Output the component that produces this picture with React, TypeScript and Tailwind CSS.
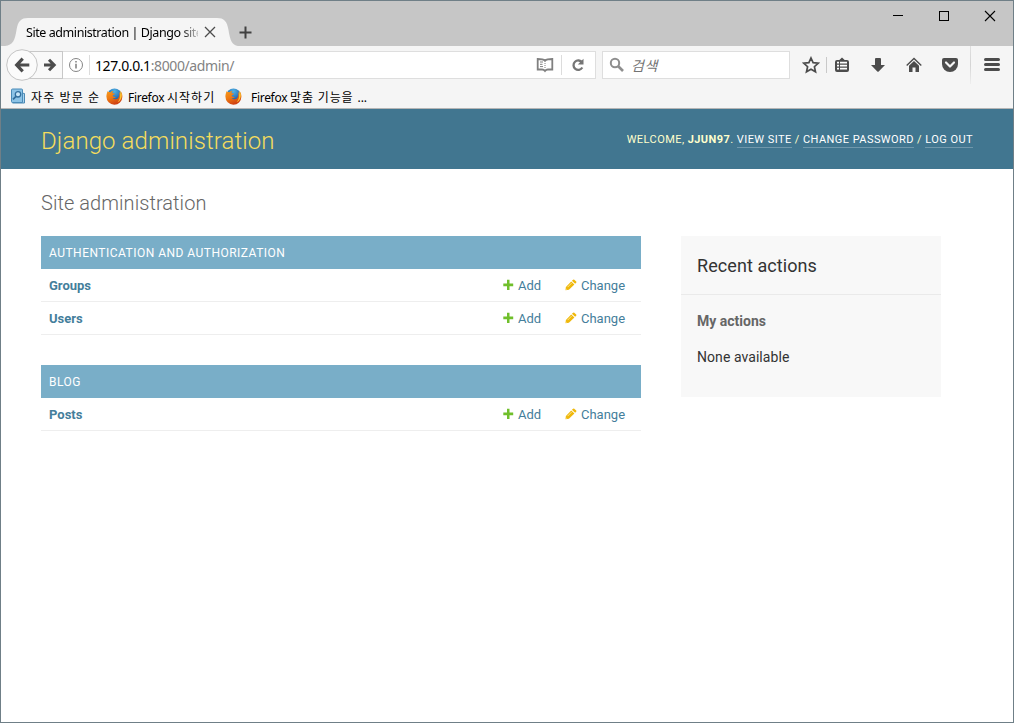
import type { ReactNode } from 'react';

function Firefox() {
  return (
    <svg width="17" height="17" viewBox="0 0 17 17" className="shrink-0">
      <defs>
        <linearGradient id="fox" x1="0" y1="0" x2="0.5" y2="1">
          <stop offset="0" stopColor="#f59a1d" />
          <stop offset="0.5" stopColor="#ee7a13" />
          <stop offset="1" stopColor="#cf3f12" />
        </linearGradient>
        <radialGradient id="globe" cx="0.5" cy="0.2" r="0.8">
          <stop offset="0" stopColor="#4fb4e6" />
          <stop offset="0.6" stopColor="#2a6fb5" />
          <stop offset="1" stopColor="#1b3c7c" />
        </radialGradient>
      </defs>
      <circle cx="8.500" cy="7.600" r="7.200" fill="url(#globe)" />
      <path d="M1.600 3.200C1 5 .4 6.500.4 8.600a8 8 0 0 0 16 .2c.1-2.600-.8-4.600-2.200-6 .6 1.500.5 2.700.4 3.700-.3-1.200-.8-2-1.500-2.600.6 2.300.4 4.600-.8 6-1.500 1.800-4.300 1.900-5.700.3 1.500.3 2.500-.2 3.300-.9-1.100-.6-2.500-.3-3.300-1.200.1-.9.9-1 1.700-1.500.5-.4.700-.7.600-1-.8-.2-1.700-.1-2.400-.7-.2-.7.300-1.300.9-1.900-1.200 0-2.200.5-2.800 1.200-.9-.1-1.600-.100-2-.1-.5-.3-.9-.7-1-1.100z" fill="url(#fox)" />
      <path d="M14.200 2.800c2 2.500 2 5.500.8 8-.8 1.800-2 2.800-3.500 3.500 1.800-2 2.800-4.500 2.600-7.500.4-1.300.4-2.500.1-4z" fill="#fbc62e" />
    </svg>
  );
}

function Plus() {
  return (
    <svg width="12" height="12" viewBox="0 0 12 12" className="shrink-0">
      <path d="M5 .8h2.500v3.700h3.700v2.700H7.500v3.700H5V7.200H1.300V4.500H5z" fill="#70bf2b" />
    </svg>
  );
}

function Pencil() {
  return (
    <svg width="12" height="12" viewBox="0 0 12 12" className="shrink-0">
      <path d="M.5 11.200l.4-3.300L6.200 2.400l3.200 3.100L3.900 10.800z" fill="#efb80b" />
      <path d="M6.900 1.800L8.100.7a.9.9 0 0 1 1.200 0l1.900 1.800a.9.9 0 0 1 0 1.200L10.100 4.800z" fill="#efb80b" />
      <path d="M2.600 8.100l4-4M1.300 10.400l.7-.2" stroke="#fff3c4" strokeWidth=".7" />
    </svg>
  );
}

function Module({ title, rows }: { title: string; rows: string[] }) {
  return (
    <section className="mb-[30px]">
      <h2 className="flex h-[33px] items-center bg-[#79aec8] px-2 text-[12px] tracking-[0.48px] text-white uppercase">{title}</h2>
      {rows.map((name) => (
        <div key={name} className="flex h-[33px] items-center border-b border-[#eeeeee] pl-2 text-[13px] text-[#447e9b]">
          <a className="flex-1 pt-[2px] font-bold">{name}</a>
          <a className="flex w-[63px] items-center"><Plus /><span className="ml-1 pt-[2px]">Add</span></a>
          <a className="flex w-[76px] items-center"><Pencil /><span className="ml-1 pt-[2px]">Change</span></a>
        </div>
      ))}
    </section>
  );
}

function Tool({ children, className }: { children: ReactNode; className: string }) {
  return <div className={`flex h-[38px] shrink-0 items-center justify-center text-[#4c4c4c] ${className}`}>{children}</div>;
}

function TitleBar() {
  return (
    <div className="flex h-[45px] bg-[#c6c6c6]">
      <div className="relative ml-1 flex h-[45px] w-[233px] pt-[17px]">
        <svg className="absolute top-[17px] left-0" width="233" height="28" viewBox="0 0 233 28">
          <path d="M0 28C8 27 10 22 11.500 12C13 3 16 0 23 0H212C219 0 222 3 223.500 12C225 22 227 27 233 28z" fill="#f5f5f5" />
        </svg>
        <span className="relative ml-[21px] w-[172px] overflow-hidden font-['Noto_Sans'] text-[12.5px] leading-[29px] tracking-[-0.43px] whitespace-nowrap text-black [mask-image:linear-gradient(to_right,#000_155px,transparent_176px)]">Site administration | Django site</span>
        <svg className="relative mt-[8px] ml-[6px]" width="12" height="12" viewBox="0 0 12 12">
          <path d="M1 1l10 10M11 1L1 11" stroke="#4c4c4c" strokeWidth="1.300" />
        </svg>
      </div>
      <svg className="mt-[25px] ml-px" width="13" height="13" viewBox="0 0 13 13">
        <path d="M6.500 .5v12M.5 6.500h12" stroke="#414141" strokeWidth="2" />
      </svg>
      <div className="ml-auto flex pt-[9px] pr-[17px]">
        <svg width="104" height="12" viewBox="0 0 104 12" fill="none" stroke="#000">
          <path d="M1 5.500h10" />
          <rect x="47.500" y="1.500" width="9" height="9" />
          <path d="M93 1l10 10M103 1L93 11" strokeWidth="1.100" />
        </svg>
      </div>
    </div>
  );
}

function NavBar() {
  return (
    <div className="flex h-[38px] items-start bg-[#f5f5f5]">
      <svg className="shrink-0" width="62" height="38" viewBox="0 0 62 38">
        <rect x="22.500" y="5.500" width="39" height="27" fill="#f9f9f9" stroke="#c8c8c8" />
        <circle cx="21" cy="19" r="15.300" fill="#fbfbfb" stroke="#c4c4c4" />
        <path d="M21.700 12.700L15.700 19l6 6.300M16 19h12.300" fill="none" stroke="#4c4c4c" strokeWidth="3.200" />
        <path d="M48 13.700L53.200 19l-5.200 5.300M53 19H43" fill="none" stroke="#4c4c4c" strokeWidth="3" />
      </svg>
      <div className="mt-[5px] flex h-[28px] w-[533px] shrink-0 items-center border border-l-0 border-[#dedede] bg-white">
        <svg className="ml-[5px]" width="16" height="16" viewBox="0 0 16 16" fill="none" stroke="#858585">
          <circle cx="8" cy="8" r="6.500" />
          <path d="M8 6.800v4.700M8 4v1.600" strokeWidth="1.600" />
        </svg>
        <div className="ml-[5px] h-5 w-px bg-[#dcdcdc]" />
        <span className="ml-[5px] pt-px font-['Noto_Sans'] text-[14px] tracking-[-0.4px] text-[#838383]"><span className="text-black">127.0.0.1</span>:8000/admin/</span>
        <svg className="ml-auto" width="18" height="16" viewBox="0 0 18 16" fill="none" stroke="#808080">
          <path d="M9 3.500C7.500 2.300 4.500 2 1.700 2v10.500h4.500c1.300 0 2 .4 2.800 1.500.8-1.100 1.500-1.500 2.800-1.500h4.500V2C13.500 2 10.500 2.300 9 3.500z" strokeWidth="1.800" />
          <path d="M9 3.500v1.500M9 6v1M9 8v1M9 10v1M4 5h3M4 7.300h2.500M4 9.600h3" />
        </svg>
        <div className="ml-[7px] h-5 w-px bg-[#dcdcdc]" />
        <svg className="mr-[9px] ml-[8px]" width="16" height="16" viewBox="0 0 16 16">
          <path d="M12.300 10.500a4.700 4.700 0 1 1-.2-5" fill="none" stroke="#757575" strokeWidth="2.300" />
          <path d="M13.500 1.800v5.700H7.800z" fill="#757575" />
        </svg>
      </div>
      <div className="mt-[5px] ml-[6px] flex h-[28px] w-[188px] shrink-0 items-center border border-[#dedede] bg-white">
        <svg className="ml-[6px]" width="16" height="16" viewBox="0 0 16 16" fill="none" stroke="#8e8e8e">
          <circle cx="6" cy="6" r="4.200" strokeWidth="2" />
          <path d="M9 9l5 5" strokeWidth="2.600" />
        </svg>
        <span className="ml-[6px] font-['Noto_Sans_CJK_KR',sans-serif] text-[14px] tracking-[0.5px] text-[#737373] italic">검색</span>
      </div>
      <Tool className="ml-[12px] w-[18px]">
        <svg width="18" height="18" viewBox="0 0 18 18">
          <path d="M9 2l2.100 4.700 5.100.5-3.800 3.500 1.100 5.100L9 13.200l-4.500 2.600 1.100-5.100L1.800 7.200l5.100-.5z" fill="none" stroke="currentColor" strokeWidth="1.700" />
        </svg>
      </Tool>
      <div className="mt-[11px] ml-[6px] h-4 w-px bg-[#c9c9c9]" />
      <Tool className="ml-[7px] w-[16px]">
        <svg width="16" height="16" viewBox="0 0 16 16">
          <path d="M3 3h2.300L8 .5 10.700 3H13q2 0 2 2v8q0 2-2 2H3q-2 0-2-2V5q0-2 2-2z" fill="currentColor" />
          <path d="M3 5.700h2M6 5.700h7M3 8.700h2M6 8.700h7M3 11.700h2M6 11.700h7" stroke="#fff" strokeWidth="1.700" />
        </svg>
      </Tool>
      <Tool className="ml-[20px] w-[16px]">
        <svg width="16" height="16" viewBox="0 0 16 16">
          <path d="M6 1q-1 0-1 1v6H1L7.300 14.500q.7.700 1.400 0L15 8H11V2q0-1-1-1z" fill="currentColor" />
        </svg>
      </Tool>
      <Tool className="ml-[20px] w-[16px]">
        <svg width="16" height="16" viewBox="0 0 16 16">
          <path d="M.7 8.500L8 1.500l7.300 7" fill="none" stroke="currentColor" strokeWidth="1.400" />
          <path d="M3 8.800l5-4.700 5 4.700V15H9.500v-4.500h-3V15H3z" fill="currentColor" />
        </svg>
      </Tool>
      <Tool className="ml-[20px] w-[16px]">
        <svg width="16" height="16" viewBox="0 0 16 16">
          <path d="M2 1h12q2 0 2 2v4a8 8 0 0 1-16 0V3q0-2 2-2z" fill="currentColor" />
          <path d="M4 5.500l4 4 4-4" fill="none" stroke="#f5f5f5" strokeWidth="2.200" strokeLinecap="round" strokeLinejoin="round" />
        </svg>
      </Tool>
      <div className="ml-[12px] h-[38px] w-px bg-linear-to-b from-[#e0e0e0] via-[#d4d4d4] to-[#eeeeee]" />
      <Tool className="ml-[13px] w-[16px]">
        <svg width="16" height="16" viewBox="0 0 16 16">
          <path d="M1.500 2.500h13M1.500 7.500h13M1.500 12.500h13" stroke="currentColor" strokeWidth="3" strokeLinecap="round" />
        </svg>
      </Tool>
    </div>
  );
}

function Bookmarks() {
  return (
    <div className="flex h-[25px] items-center border-b border-[#b5b5b5] bg-[#f5f5f5] pl-[9px] font-['Noto_Sans','Noto_Sans_CJK_KR',sans-serif] text-[12px] leading-[20px] whitespace-nowrap text-black">
      <svg width="16" height="17" viewBox="0 0 16 17" className="shrink-0">
        <path d="M11.500 5l3 .5v9.500h-12z" fill="#a9d3ee" stroke="#4c89b4" />
        <path d="M1.500 2q0-1 1-1h9q1 0 1 1v12.500h-10q-1 0-1-1z" fill="#8cc3e6" stroke="#4a8bb8" />
        <circle cx="8" cy="6.300" r="2.700" fill="#c7e6f8" stroke="#326e9c" strokeWidth="1.300" />
        <path d="M6 8.400l-3 3" stroke="#326e9c" strokeWidth="1.700" />
      </svg>
      <span className="ml-[5px] w-[75px] pt-[3px] tracking-[1.1px]">자주 방문 순</span>
      <Firefox />
      <span className="ml-[5px] w-[97px] pt-[3px]"><span className="tracking-[-0.3px]">Firefox </span><span className="tracking-[1px]">시작하기</span></span>
      <Firefox />
      <span className="ml-[9px] pt-[3px]"><span className="tracking-[-0.3px]">Firefox </span><span className="tracking-[0.85px]">맞춤 기능을 </span>...</span>
    </div>
  );
}

export default function App() {
  return (
    <div className="flex h-[723px] w-[1014px] flex-col overflow-hidden border border-[#6f7f87] bg-white font-['Roboto',sans-serif]">
      <TitleBar />
      <NavBar />
      <Bookmarks />
      <header className="flex h-[60px] shrink-0 items-center justify-between bg-[#417690] px-10">
        <h1 className="pt-[4px] text-[24px] font-light tracking-[0.1px] text-[#f5dd5d]">Django administration</h1>
        <div className="pt-px text-[11px] leading-[15px] tracking-[0.44px] whitespace-nowrap text-[#ffffcc] uppercase">
          Welcome, <strong className="font-bold">jjun97</strong>. <a className="inline-block border-b border-white/25 text-white">View site</a> / <a className="inline-block border-b border-white/25 text-white">Change password</a> / <a className="inline-block border-b border-white/25 text-white">Log out</a>
        </div>
      </header>
      <main className="flex-1 px-10 pt-[20px]">
        <h1 className="mb-[19px] text-[20px] leading-[28px] font-light tracking-[0.06px] text-[#666666]">Site administration</h1>
        <div className="flex items-start gap-10">
          <div className="w-[600px]">
            <Module title="Authentication and Authorization" rows={['Groups', 'Users']} />
            <Module title="Blog" rows={['Posts']} />
          </div>
          <aside className="h-[161px] w-[260px] bg-[#f8f8f8]">
            <h2 className="flex h-[59px] items-center border-b border-[#eaeaea] px-4 text-[18px] tracking-[0.08px] text-[#333333]">Recent actions</h2>
            <h3 className="mt-[17px] px-4 text-[14px] leading-[18px] font-bold text-[#666666]">My actions</h3>
            <p className="mt-[18px] px-4 text-[14px] leading-[18px] tracking-[0.06px] text-[#333333]">None available</p>
          </aside>
        </div>
      </main>
    </div>
  );
}
